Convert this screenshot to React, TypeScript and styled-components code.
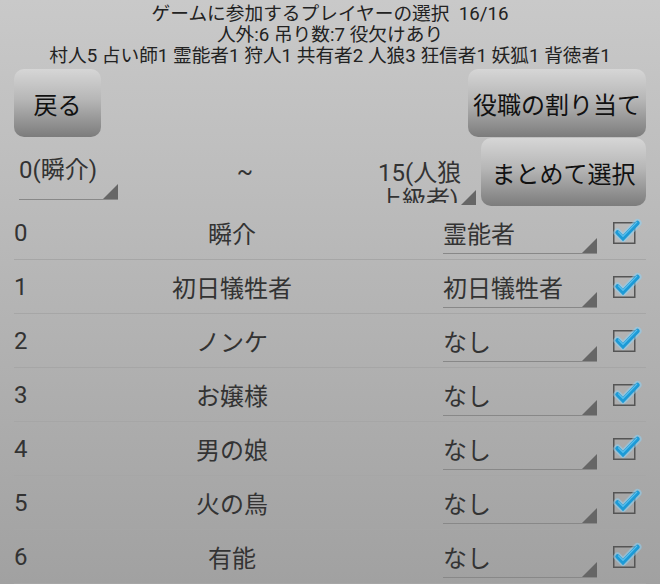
import React from "react";
import styled, { createGlobalStyle } from "styled-components";

const GlobalStyle = createGlobalStyle`
  html, body { margin: 0; padding: 0; }
  body {
    width: 660px;
    height: 584px;
    overflow: hidden;
    font-family: Roboto, "Noto Sans CJK JP", sans-serif;
  }
`;

const Screen = styled.div`
  width: 660px;
  height: 584px;
  overflow: hidden;
  background: linear-gradient(#c9c9c9, #a1a1a1);
  color: #333;
`;

const Header = styled.div`
  padding-top: 4px;
  text-align: center;
  font-size: 18.7px;
  line-height: 21px;
  color: #222;
  height: 68px;
  box-sizing: border-box;
  white-space: nowrap;
`;

const ButtonBar = styled.div`
  display: flex;
  justify-content: space-between;
  height: 68px;
  padding: 0 14px;
  margin-top: 1px;
`;

const Button = styled.button<{ $w: number }>`
  width: ${(p) => p.$w}px;
  height: 68px;
  border: none;
  border-radius: 10px;
  background: linear-gradient(#d6d6d6, #b6b6b6 45%, #7c7c7c);
  font-family: Roboto, "Noto Sans CJK JP", sans-serif;
  font-size: 24px;
  color: #111;
  padding: 0;
  cursor: pointer;
  white-space: nowrap;
`;

const Controls = styled.div`
  display: flex;
  height: 68px;
  margin-top: 1px;
  padding: 0 14px 0 19px;
`;

const Triangle = styled.span`
  position: absolute;
  right: 0;
  bottom: 0;
  width: 15px;
  height: 15px;
  background: #666;
  clip-path: polygon(100% 0, 100% 100%, 0 100%);
`;

const RangeSpinner = styled.div<{ $w: number }>`
  position: relative;
  width: ${(p) => p.$w}px;
  box-sizing: border-box;
  padding: 19px 18px 0 0;
  margin-bottom: 6px;
  border-bottom: 1px solid #888;
  font-size: 24px;
  line-height: 27px;
  overflow: hidden;
  color: #333;
  white-space: nowrap;
`;

const RightSpinner = styled.div<{ $w: number }>`
  position: relative;
  width: ${(p) => p.$w}px;
  box-sizing: border-box;
  padding: 22px 12px 0 12px;
  margin: 0 5px 1px 0;
  font-size: 24px;
  line-height: 27px;
  color: #333;
`;

const ClippedText = styled.div`
  height: 43px;
  overflow: hidden;
  word-break: break-all;
`;

const Tilde = styled.div`
  flex: 1;
  display: flex;
  align-items: center;
  justify-content: center;
  font-size: 24px;
  color: #333;
  padding: 0 0 0 6px;
`;

const List = styled.div`
  display: flex;
  flex-direction: column;
`;

const Row = styled.div`
  display: flex;
  align-items: center;
  height: 54px;
  margin: 0 14px;
  box-sizing: border-box;
  border-bottom: 1px solid #a6a6a6;
  font-size: 24px;
`;

const Num = styled.div`
  width: 30px;
  color: #333;
`;

const Name = styled.div`
  width: 376px;
  text-align: center;
  color: #333;
`;

const RoleSpinner = styled.div`
  position: relative;
  align-self: flex-end;
  width: 154px;
  height: 34px;
  box-sizing: border-box;
  margin: 0 0 5px 23px;
  padding-top: 2px;
  line-height: 27px;
  border-bottom: 1px solid #888;
  color: #333;
  white-space: nowrap;
`;

const CheckWrap = styled.div`
  margin-left: 13px;
  width: 32px;
  height: 32px;
  margin-top: -3px;
`;

function Check() {
  return (
    <CheckWrap>
      <svg width="32" height="32" viewBox="0 0 32 32">
        <rect x="3.75" y="7.75" width="21" height="20.5" fill="none" stroke="#555" strokeWidth="1.5" />
        <polyline
          points="7.5,17.5 13,23 27.5,8"
          fill="none"
          stroke="rgba(140,210,245,0.55)"
          strokeWidth="8"
          strokeLinecap="round"
          strokeLinejoin="round"
        />
        <polyline
          points="7.5,17.5 13,23 27.5,8"
          fill="none"
          stroke="#1d9ad6"
          strokeWidth="4.5"
          strokeLinecap="round"
          strokeLinejoin="miter"
        />
        <polyline
          points="8.5,16.8 13,21.3 26.8,7.2"
          fill="none"
          stroke="#5cc0ee"
          strokeWidth="1.2"
          strokeLinecap="round"
        />
      </svg>
    </CheckWrap>
  );
}

const players: [string, string, string][] = [
  ["0", "瞬介", "霊能者"],
  ["1", "初日犠牲者", "初日犠牲者"],
  ["2", "ノンケ", "なし"],
  ["3", "お嬢様", "なし"],
  ["4", "男の娘", "なし"],
  ["5", "火の鳥", "なし"],
  ["6", "有能", "なし"],
];

export default function App() {
  return (
    <>
      <GlobalStyle />
      <Screen>
        <Header>
          <div>ゲームに参加するプレイヤーの選択&nbsp;&nbsp;16/16</div>
          <div>人外:6 吊り数:7 役欠けあり</div>
          <div>村人5 占い師1 霊能者1 狩人1 共有者2 人狼3 狂信者1 妖狐1 背徳者1</div>
        </Header>
        <ButtonBar>
          <Button $w={87}>戻る</Button>
          <Button $w={178}>役職の割り当て</Button>
        </ButtonBar>
        <Controls>
          <RangeSpinner $w={99}>
            0(瞬介)
            <Triangle />
          </RangeSpinner>
          <Tilde>~</Tilde>
          <RightSpinner $w={110}>
            <ClippedText>15(人狼上級者)</ClippedText>
            <Triangle />
          </RightSpinner>
          <Button $w={165}>まとめて選択</Button>
        </Controls>
        <List>
          {players.map(([n, name, role]) => (
            <Row key={n}>
              <Num>{n}</Num>
              <Name>{name}</Name>
              <RoleSpinner>
                {role}
                <Triangle />
              </RoleSpinner>
              <Check />
            </Row>
          ))}
        </List>
      </Screen>
    </>
  );
}
